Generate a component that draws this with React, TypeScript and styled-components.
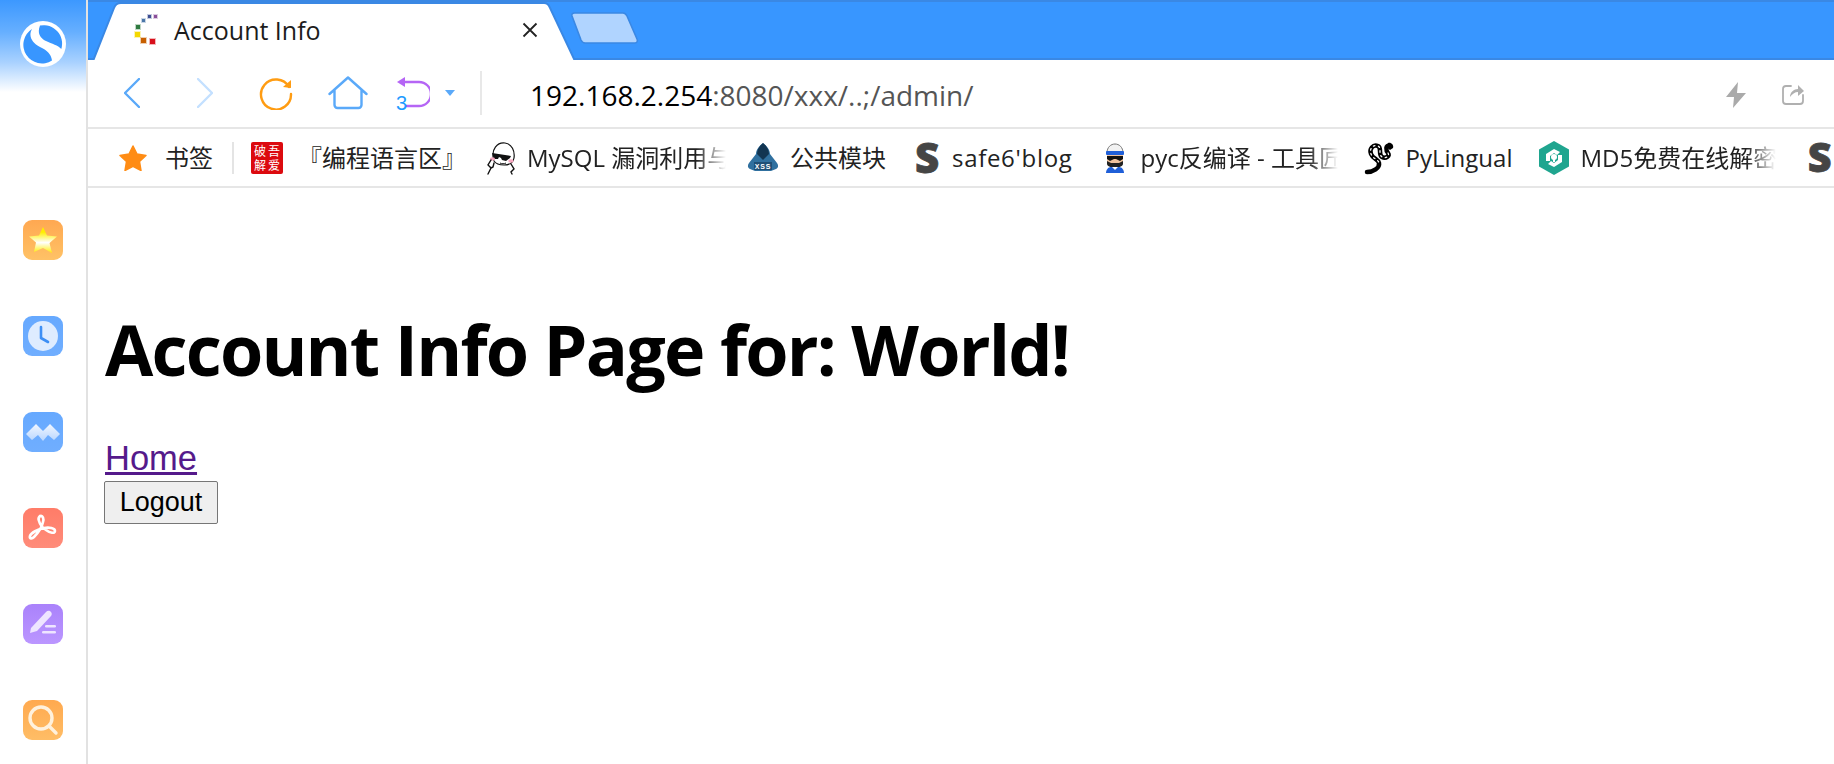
import React from 'react';
import styled, { createGlobalStyle } from 'styled-components';

const UI_FONT = `"Open Sans", "Noto Sans CJK SC", sans-serif`;

const GlobalStyle = createGlobalStyle`
	html, body {
		margin: 0;
		padding: 0;
		background: #fff;
		overflow: hidden;
	}
`;

const Shell = styled.div`
	display: flex;
	width: 1834px;
	height: 764px;
	overflow: hidden;
`;

const Sidebar = styled.aside`
	display: flex;
	flex-direction: column;
	align-items: center;
	flex: 0 0 88px;
	box-sizing: border-box;
	border-right: 2px solid #e2e2e2;
	background: linear-gradient(#3c98ff 0, #66afff 32px, #a8d1ff 62px, #fff 92px);
	padding-top: 21px;
`;

const SideIcons = styled.div`
	display: flex;
	flex-direction: column;
	gap: 56px;
	margin-top: 153px;
`;

const SideIcon = styled.div<{ $from: string; $to: string }>`
	display: flex;
	align-items: center;
	justify-content: center;
	width: 40px;
	height: 40px;
	border-radius: 9px;
	background: linear-gradient(${({ $from }) => $from}, ${({ $to }) => $to});
`;

const Main = styled.div`
	display: flex;
	flex-direction: column;
	flex: 1;
	min-width: 0;
`;

const TabStrip = styled.div`
	display: flex;
	align-items: flex-end;
	height: 60px;
	box-sizing: border-box;
	background: #3896ff;
	border-top: 2px solid #3a88e4;
	box-shadow: inset 0 -2px 0 #3a88e4;
`;

const Tab = styled.div`
	position: relative;
	display: flex;
	align-items: center;
	flex: none;
	width: 490px;
	height: 58px;
	box-sizing: border-box;
	padding: 0 0 2px 45px;
`;

const TabShape = styled.svg`
	position: absolute;
	left: 0;
	top: 0;
`;

const TabFavicon = styled.svg`
	position: relative;
`;

const TabTitle = styled.span`
	position: relative;
	margin-left: 15px;
	font: 25px ${UI_FONT};
	color: #1c1c1c;
`;

const TabClose = styled.svg`
	position: absolute;
	left: 434px;
	top: 20px;
`;

const NewTab = styled.svg`
	flex: none;
	margin: 0 0 16px -8px;
`;

const Toolbar = styled.div`
	display: flex;
	align-items: center;
	height: 69px;
	box-sizing: border-box;
	border-bottom: 2px solid #e6e6e6;
	padding: 0 0 2px 36px;
`;

const NavIcon = styled.svg<{ $gap: number; $drop?: number }>`
	flex: none;
	margin-right: ${({ $gap }) => $gap}px;
	margin-top: ${({ $drop }) => $drop ?? 0}px;
`;

const Divider = styled.div`
	flex: none;
	width: 2px;
	height: 44px;
	background: #e8e8e8;
`;

const Address = styled.div`
	flex: 1;
	margin: 4px 0 0 48px;
	font: 28px ${UI_FONT};
	color: #555;
	white-space: nowrap;
`;

const Host = styled.span`
	color: #000;
`;

const BookmarkBar = styled.nav`
	display: flex;
	align-items: center;
	height: 59px;
	box-sizing: border-box;
	border-bottom: 2px solid #e6e6e6;
	padding-left: 31px;
	overflow: hidden;
`;

const Bookmark = styled.div<{ $gap: number }>`
	display: flex;
	flex: none;
	align-items: center;
	margin-right: ${({ $gap }) => $gap}px;
`;

const BookmarkLabel = styled.span<{ $offset: number; $width?: number; $track?: number }>`
	display: block;
	margin-left: ${({ $offset }) => $offset}px;
	font: 24px/34px ${UI_FONT};
	letter-spacing: ${({ $track }) => $track ?? 0}px;
	color: #222;
	white-space: nowrap;
	overflow: hidden;
	${({ $width }) =>
		$width
			? `
		width: ${$width}px;
		-webkit-mask-image: linear-gradient(to right, #000 85%, transparent);
		mask-image: linear-gradient(to right, #000 85%, transparent);
	`
			: ''}
`;

const BookmarkSep = styled.div`
	flex: none;
	width: 2px;
	height: 32px;
	margin-right: 17px;
	background: #e4e4e4;
`;

const Page = styled.main`
	flex: 1;
	padding: 0 17px;
`;

const Heading = styled.h1`
	margin: 115px 0 44px;
	font: 700 70px/92px "Open Sans", sans-serif;
	letter-spacing: -1.8px;
	color: #000;
`;

const HomeLink = styled.a`
	display: block;
	width: max-content;
	font: 34.5px/38px "Liberation Sans", sans-serif;
	color: #551a8b;
	text-decoration: underline;
	text-decoration-thickness: 3px;
`;

const LogoutButton = styled.button`
	display: block;
	width: 114px;
	height: 43px;
	margin: 4px 0 0 -1px;
	padding: 0;
	box-sizing: border-box;
	font: 27px "Liberation Sans", sans-serif;
	color: #000;
	background: #efefef;
	border: 1px solid #767676;
	border-radius: 2px;
`;

const Logo = () => (
	<svg width="46" height="46" viewBox="0 0 46 46">
		<circle cx="23" cy="23" r="23" fill="#fff" />
		<path d="M20 4.500A18.500 18.500 0 0 1 41.300 28C38 24 32 23 26 20 20 17 17 12 20 4.500z" fill="#3896ff" />
		<path d="M12 8A18.500 18.500 0 0 0 32 39.500C31 33 27 29 20 26 12 22 8 15 12 8z" fill="#3896ff" />
	</svg>
);

const ChevronIcon = ({ color, flip, gap }: { color: string; flip?: boolean; gap: number }) => (
	<NavIcon $gap={gap} width="16" height="30" viewBox="0 0 16 30">
		<path d={flip ? 'M1 1l14 14L1 29' : 'M15 1L1 15l14 14'} fill="none" stroke={color} strokeWidth="2.4" strokeLinecap="round" strokeLinejoin="round" />
	</NavIcon>
);

const Seal = () => (
	<svg width="32" height="32" viewBox="0 0 32 32">
		<rect width="32" height="32" rx="2" fill="#dc0a0f" />
		<g fill="#fff" fontSize="12" fontFamily="Noto Sans CJK SC" textAnchor="middle">
			<text x="9" y="14">破</text>
			<text x="23" y="14">吾</text>
			<text x="9" y="28">解</text>
			<text x="23" y="28">爱</text>
		</g>
	</svg>
);

const Meme = () => (
	<svg width="30" height="34" viewBox="0 0 30 34">
		<path d="M8 20C4 8 12 1 19 2c7 1 10 8 9 15-1 5-5 7-10 7-4 0-8-1-10-4z" fill="#fff" stroke="#111" strokeWidth="1.200" />
		<path d="M6 12l19 3-1 2-4 3-4-1-1-2-2-1-1 2-4 0z" fill="#111" />
		<ellipse cx="6.500" cy="18" rx="2.600" ry="1.800" fill="#f7a8c0" />
		<ellipse cx="25" cy="20" rx="2.600" ry="1.800" fill="#f7a8c0" />
		<path d="M14 22c2 1 4 1 6 0" fill="none" stroke="#111" />
		<path d="M5 19l-3 5 3 3-3 6M8 22l-1 4-2 1M25 23l3 5-3 3 1 2" fill="none" stroke="#111" strokeWidth="1.400" strokeLinecap="round" />
	</svg>
);

const Hoodie = () => (
	<svg width="32" height="30" viewBox="0 0 32 30">
		<path d="M16 0c4 3 7 7 7 11l7 9c2 3 1 5-1 6l-5 2H8l-5-2c-2-1-3-3-1-6l7-9c0-4 3-8 7-11z" fill="#30709f" />
		<path d="M16 0c4 3 6 7 6 11l-6 6-6-6c0-4 2-8 6-11z" fill="#123552" />
		<rect x="7" y="19" width="18" height="8" fill="#1f4f76" />
		<text x="16" y="26" textAnchor="middle" fontSize="7" fontWeight="700" letterSpacing="0.8" fill="#fff" fontFamily="Liberation Sans">XSS</text>
	</svg>
);

const SafeS = () => (
	<svg width="28" height="32" viewBox="0 0 28 32">
		<text x="14" y="30.500" textAnchor="middle" fontSize="42" fontWeight="800" fill="#454545" stroke="#454545" strokeWidth="0.8" fontFamily="Open Sans">S</text>
	</svg>
);

const Pirate = () => (
	<svg width="24" height="30" viewBox="0 0 24 30">
		<path d="M4 10C4-2 20-2 20 10z" fill="#f2f2f2" stroke="#777" />
		<rect x="3" y="8" width="18" height="4" rx="1" fill="#1f5fd8" />
		<path d="M4 12h16v7c0 6-16 6-16 0z" fill="#f1c39d" />
		<path d="M4 13h16v3l-3 2-4-2h-2l-4 2-3-2z" fill="#111" />
		<path d="M4 18l4 2h8l4-2v3c-1 5-15 5-16 0z" fill="#222" />
		<path d="M3 30c0-3 2-6 5-6h8c3 0 5 3 5 6z" fill="#1f5fd8" />
		<path d="M9 24l3 3 3-3z" fill="#fff" />
	</svg>
);

const Snake = () => (
	<svg width="30" height="34" viewBox="0 0 30 34">
		<g fill="none" strokeLinecap="round">
			<path d="M26 5C21 3 22 10 24 12 26 15 22 18 18 16 14 13 18 7 14 5 9 3 5 8 7 13 9 18 14 18 15 22 16 27 9 31 3 31" stroke="#000" strokeWidth="4.500" />
			<path d="M24 12C26 15 22 18 18 16 14 13 18 7 14 5 9 3 5 8 7 13 9 18 14 18 15 22" stroke="#fff" strokeWidth="1.300" strokeDasharray="1.500 3.500" />
		</g>
		<path d="M24 2c3-1 6 2 5 5l-3 2-4-3z" fill="#000" />
	</svg>
);

const HashIcon = () => (
	<svg width="32" height="34" viewBox="0 0 32 34">
		<path d="M16 0l15 8.500v17L16 34 1 25.500v-17z" fill="#1fa58f" />
		<path d="M8 20v-7l8-5 6 3-3 3-3-2-4 3v5zM24 14v7l-8 5-6-3 3-3 3 2 4-3v-5z" fill="#fff" />
		<circle cx="16" cy="16" r="3" fill="#fff" />
		<rect x="15" y="16" width="2" height="5" fill="#fff" />
	</svg>
);

const FAVICON_DOTS: { x: number; y: number; s: number; fill: string }[] = [
	{ x: 15, y: 1, s: 3, fill: '#3d4f93' },
	{ x: 21, y: 1, s: 3, fill: '#8a4f9a' },
	{ x: 9, y: 5, s: 3, fill: '#4d77a8' },
	{ x: 3, y: 11, s: 4, fill: '#2f7a3f' },
	{ x: 2, y: 18, s: 5, fill: '#f4d800' },
	{ x: 8, y: 24, s: 5, fill: '#c85f00' },
	{ x: 17, y: 25, s: 5, fill: '#d8101c' },
];

const SIDE_ICONS: { from: string; to: string; icon: React.ReactNode }[] = [
	{
		from: '#ffa851',
		to: '#ffc266',
		icon: (
			<svg width="30" height="28" viewBox="0 0 30 28">
				<defs>
					<linearGradient id="sideStar" x1="0" y1="0" x2="0" y2="1">
						<stop offset="0.2" stopColor="#ffee00" />
						<stop offset="0.6" stopColor="#fff" />
						<stop offset="1" stopColor="#ffee00" />
					</linearGradient>
				</defs>
				<path d="M15 1l4 8.500 10 1-7.500 6.500 2.500 10-9-5-9 4 2-9.500L1 10.500l10-1z" fill="url(#sideStar)" strokeLinejoin="round" />
			</svg>
		),
	},
	{
		from: '#66a9ff',
		to: '#70aeff',
		icon: (
			<svg width="32" height="32" viewBox="0 0 32 32">
				<circle cx="16" cy="16" r="15" fill="#deecff" />
				<path d="M14 7v11l7 4" fill="none" stroke="#3d8ff5" strokeWidth="2.600" strokeLinecap="round" strokeLinejoin="round" />
			</svg>
		),
	},
	{
		from: '#66a9ff',
		to: '#70aeff',
		icon: (
			<svg width="34" height="20" viewBox="0 0 34 20">
				<defs>
					<linearGradient id="sideWave" x1="0" y1="0" x2="0" y2="1">
						<stop offset="0" stopColor="#f2f7ff" />
						<stop offset="1" stopColor="#b8d6ff" />
					</linearGradient>
				</defs>
				<path d="M0 12L10 2l7 7 7-7 10 10-6 6-6-5-5 6-5-6-6 5z" fill="url(#sideWave)" />
			</svg>
		),
	},
	{
		from: '#ff7c68',
		to: '#ff8c7a',
		icon: (
			<svg width="30" height="30" viewBox="0 0 30 30">
				<path d="M12 3c3-1 4 3 3 6-1 5-5 11-9 15-2 2-5 2-4-1 1-3 8-7 14-8 5-1 11 0 11 3s-5 2-9-1c-3-2-6-5-7-9-1-2 0-4 1-5z" fill="none" stroke="#fff" strokeWidth="2.600" />
			</svg>
		),
	},
	{
		from: '#aa82fb',
		to: '#bb96ff',
		icon: (
			<svg width="28" height="28" viewBox="0 0 28 28">
				<path d="M2 18L17 2c2-2 4-1 5 0s1 3 0 4L8 21l-7 2z" fill="#eee5ff" />
				<rect x="16" y="15" width="11" height="2.600" rx="1.300" fill="#eee5ff" />
				<rect x="13" y="21" width="14" height="2.600" rx="1.300" fill="#eee5ff" />
			</svg>
		),
	},
	{
		from: '#ffa94f',
		to: '#ffbd66',
		icon: (
			<svg width="32" height="32" viewBox="0 0 32 32">
				<circle cx="14" cy="14" r="11" fill="none" stroke="#fff1dc" strokeWidth="3.400" />
				<path d="M22 22l7 7" stroke="#fff1dc" strokeWidth="3.400" strokeLinecap="round" />
			</svg>
		),
	},
];

const App = (): JSX.Element => {
	return (
		<Shell>
			<GlobalStyle />
			<Sidebar>
				<Logo />
				<SideIcons>
					{SIDE_ICONS.map(({ from, to, icon }, i) => (
						<SideIcon key={i} $from={from} $to={to}>
							{icon}
						</SideIcon>
					))}
				</SideIcons>
			</Sidebar>
			<Main>
				<TabStrip>
					<Tab>
						<TabShape width="490" height="58" viewBox="0 0 490 58">
							<path d="M5 59L26 6c1-3 4-5 7-5h423c3 0 5 2 6 5l25 53z" fill="#fff" stroke="#3a88e4" strokeWidth="2" />
						</TabShape>
						<TabFavicon width="26" height="32" viewBox="0 0 26 32">
							{FAVICON_DOTS.map(({ x, y, s, fill }) => (
								<rect key={fill} x={x} y={y} width={s} height={s} fill={fill} stroke={fill} strokeOpacity="0.3" strokeWidth="2" />
							))}
						</TabFavicon>
						<TabTitle>Account Info</TabTitle>
						<TabClose width="16" height="16" viewBox="0 0 16 16">
							<path d="M1.500 1.500l13 13M14.500 1.500l-13 13" stroke="#222" strokeWidth="1.800" />
						</TabClose>
					</Tab>
					<NewTab width="69" height="32" viewBox="0 0 69 32">
						<path d="M2 4c-.5-2 .5-3 2.500-3H53c2 0 3 1 4 3l10 23c1 2 0 4-2 4H15c-2 0-3-1-4-3z" fill="#b0d4ff" stroke="#3a88e4" strokeWidth="1.600" />
					</NewTab>
				</TabStrip>
				<Toolbar>
					<ChevronIcon color="#5aa9f9" gap={57} />
					<ChevronIcon color="#c4e0ff" flip gap={46} />
					<NavIcon $gap={35} width="34" height="34" viewBox="0 0 34 34">
						<path d="M30 11A15 15 0 1 0 32 18" fill="none" stroke="#ff9c12" strokeWidth="2.400" strokeLinecap="round" />
						<path d="M24 11l8-7v8z" fill="#ff9c12" />
					</NavIcon>
					<NavIcon $gap={28} width="40" height="34" viewBox="0 0 40 34">
						<path d="M1.500 18L20 1.500 38.500 18M6.500 14v15a3 3 0 0 0 3 3h21a3 3 0 0 0 3-3V14" fill="none" stroke="#5aa9f9" strokeWidth="2.400" strokeLinecap="round" strokeLinejoin="round" />
					</NavIcon>
					<NavIcon $gap={15} width="34" height="34" viewBox="0 0 34 34">
						<path d="M8 6h15a10.500 10.500 0 0 1 0 24H10" fill="none" stroke="#b565f5" strokeWidth="2.400" />
						<path d="M1 6l8-5v10z" fill="#b565f5" />
						<text x="0" y="33.500" fontSize="20" fill="#1e9bff" fontFamily="Liberation Sans">3</text>
					</NavIcon>
					<NavIcon $gap={25} width="10" height="6" viewBox="0 0 10 6">
						<path d="M0 0h10L5 6z" fill="#5aa9f9" />
					</NavIcon>
					<Divider />
					<Address>
						<Host>192.168.2.254</Host>:8080/xxx/..;/admin/
					</Address>
					<NavIcon $gap={35} $drop={4} width="22" height="26" viewBox="0 0 22 26">
						<path d="M13 0L1 15h8l-1 11 13-15h-9z" fill="#aaa" />
					</NavIcon>
					<NavIcon $gap={30} $drop={2} width="22" height="22" viewBox="0 0 22 22">
						<path d="M9 3H4a3 3 0 0 0-3 3v12a3 3 0 0 0 3 3h14a3 3 0 0 0 3-3v-6" fill="none" stroke="#b0b0b0" strokeWidth="1.800" strokeLinecap="round" />
						<path d="M8 14c0-5 4-8 8-8V2l6 6-6 5V9c-3 0-6 2-8 5z" fill="#b0b0b0" />
					</NavIcon>
				</Toolbar>
				<BookmarkBar>
					<Bookmark $gap={19}>
						<svg width="28" height="26" viewBox="0 0 28 26">
							<path d="M14 1l4 8 9 1.500-6.500 6 1.500 9-8-4.200-8 4.200 1.500-9L1 10.500 10 9z" fill="#ff8c14" stroke="#ff8c14" strokeWidth="1.500" strokeLinejoin="round" />
						</svg>
						<BookmarkLabel $offset={18}>书签</BookmarkLabel>
					</Bookmark>
					<BookmarkSep />
					<Bookmark $gap={20}>
						<Seal />
						<BookmarkLabel $offset={15}>『编程语言区』</BookmarkLabel>
					</Bookmark>
					<Bookmark $gap={21}>
						<Meme />
						<BookmarkLabel $offset={11} $width={199}>MySQL 漏洞利用与</BookmarkLabel>
					</Bookmark>
					<Bookmark $gap={27}>
						<Hoodie />
						<BookmarkLabel $offset={11}>公共模块</BookmarkLabel>
					</Bookmark>
					<Bookmark $gap={30}>
						<SafeS />
						<BookmarkLabel $offset={11} $track={0.7}>safe6'blog</BookmarkLabel>
					</Bookmark>
					<Bookmark $gap={26}>
						<Pirate />
						<BookmarkLabel $offset={14} $width={197}>pyc反编译 - 工具匠</BookmarkLabel>
					</Bookmark>
					<Bookmark $gap={26}>
						<Snake />
						<BookmarkLabel $offset={12}>PyLingual</BookmarkLabel>
					</Bookmark>
					<Bookmark $gap={30}>
						<HashIcon />
						<BookmarkLabel $offset={10} $width={196}>MD5免费在线解密</BookmarkLabel>
					</Bookmark>
					<SafeS />
				</BookmarkBar>
				<Page>
					<Heading>Account Info Page for: World!</Heading>
					<HomeLink href="#">Home</HomeLink>
					<LogoutButton>Logout</LogoutButton>
				</Page>
			</Main>
		</Shell>
	);
};

export default App;
